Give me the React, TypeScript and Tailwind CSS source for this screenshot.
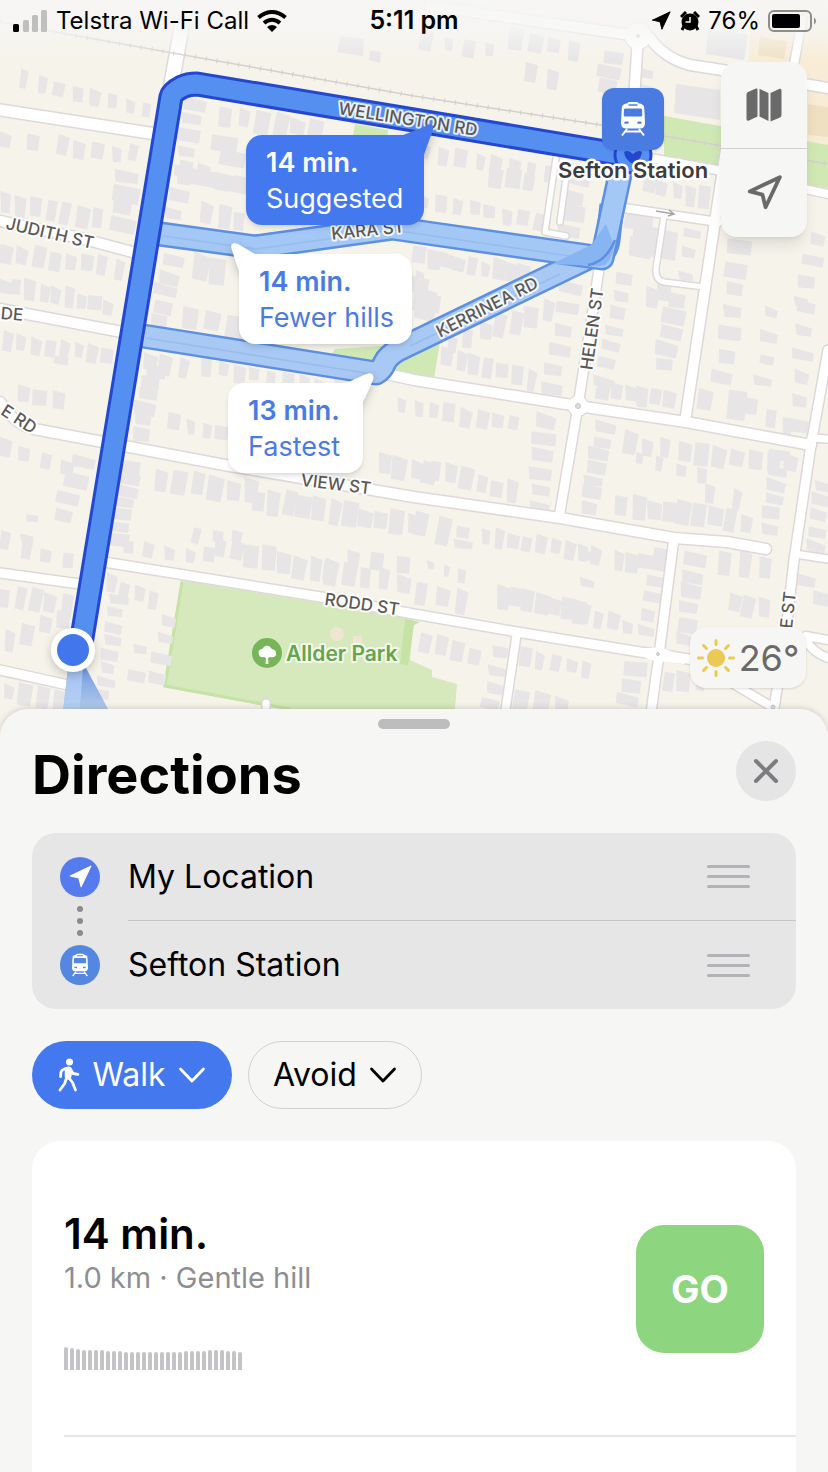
import React from "react";
import { Navigation, X } from "lucide-react";

// x1, y1, x2, y2, number of houses, house size
const houseRows = [
    [24, 80, 146, 110, 8, 13],
    [4, 140, 62, 146, 3, 16],
    [78, 150, 134, 154, 4, 14],
    [126, 176, 122, 226, 4, 20],
    [6, 202, 96, 218, 7, 15],
    [6, 254, 118, 268, 8, 15],
    [4, 286, 108, 306, 9, 15],
    [6, 340, 106, 356, 8, 14],
    [22, 392, 58, 400, 3, 16],
    [62, 362, 58, 396, 2, 10],
    [4, 446, 66, 468, 4, 15],
    [82, 462, 62, 514, 4, 18],
    [32, 518, 28, 540, 2, 12],
    [4, 540, 68, 562, 4, 13],
    [4, 598, 66, 606, 5, 16],
    [8, 640, 62, 618, 4, 15],
    [8, 690, 60, 702, 4, 16],
    [195, 104, 186, 152, 4, 17],
    [226, 116, 316, 130, 6, 17],
    [224, 142, 232, 158, 2, 20],
    [184, 172, 240, 184, 4, 16],
    [180, 196, 174, 214, 2, 16],
    [206, 212, 240, 220, 3, 17],
    [174, 262, 158, 322, 5, 17],
    [200, 268, 218, 270, 2, 20],
    [190, 316, 236, 328, 3, 19],
    [206, 368, 336, 388, 9, 14],
    [150, 362, 182, 370, 3, 16],
    [154, 370, 140, 434, 6, 17],
    [174, 422, 222, 434, 4, 15],
    [426, 152, 550, 174, 8, 14],
    [494, 176, 530, 182, 3, 17],
    [424, 200, 540, 222, 8, 13],
    [576, 180, 568, 232, 4, 20],
    [420, 256, 524, 274, 9, 15],
    [416, 284, 428, 302, 2, 22],
    [452, 342, 548, 312, 7, 16],
    [446, 356, 530, 380, 7, 15],
    [570, 288, 550, 390, 6, 17],
    [624, 278, 604, 380, 7, 16],
    [664, 290, 652, 296, 2, 16],
    [676, 300, 664, 364, 5, 18],
    [604, 390, 668, 398, 6, 15],
    [692, 232, 684, 274, 3, 13],
    [740, 248, 722, 376, 7, 18],
    [818, 240, 800, 300, 4, 16],
    [806, 308, 796, 424, 6, 16],
    [772, 314, 762, 380, 4, 14],
    [706, 400, 738, 404, 2, 22],
    [752, 408, 788, 428, 3, 14],
    [638, 222, 640, 246, 2, 24],
    [402, 406, 514, 424, 8, 14],
    [546, 422, 538, 506, 6, 18],
    [384, 462, 430, 474, 4, 17],
    [436, 470, 512, 492, 6, 16],
    [604, 428, 588, 506, 7, 16],
    [630, 444, 790, 464, 10, 16],
    [638, 460, 700, 474, 4, 12],
    [622, 504, 746, 522, 9, 17],
    [708, 494, 736, 500, 2, 14],
    [780, 456, 770, 528, 6, 16],
    [822, 486, 814, 546, 5, 15],
    [162, 480, 250, 492, 6, 17],
    [258, 500, 412, 524, 11, 18],
    [130, 466, 118, 540, 7, 16],
    [128, 548, 210, 556, 5, 14],
    [196, 534, 238, 538, 3, 12],
    [220, 548, 330, 574, 8, 18],
    [330, 572, 402, 582, 5, 16],
    [352, 556, 404, 566, 3, 15],
    [112, 584, 152, 600, 4, 14],
    [118, 600, 102, 696, 8, 15],
    [168, 620, 158, 676, 4, 15],
    [140, 650, 136, 676, 2, 15],
    [420, 524, 444, 530, 2, 22],
    [462, 532, 464, 544, 2, 14],
    [486, 536, 596, 554, 9, 14],
    [430, 566, 460, 574, 3, 10],
    [420, 594, 462, 600, 3, 18],
    [502, 596, 580, 610, 7, 17],
    [584, 614, 626, 626, 4, 14],
    [618, 562, 660, 560, 4, 16],
    [656, 564, 646, 632, 5, 15],
    [590, 556, 588, 584, 2, 13],
    [694, 560, 686, 640, 6, 18],
    [724, 562, 766, 568, 3, 20],
    [734, 602, 764, 608, 3, 18],
    [806, 580, 822, 600, 2, 18],
    [424, 642, 474, 656, 4, 15],
    [500, 652, 490, 704, 4, 16],
    [524, 658, 586, 668, 5, 14],
    [634, 668, 626, 700, 3, 17],
    [668, 682, 700, 684, 3, 16],
    [520, 700, 560, 706, 3, 18],
    [426, 42, 490, 50, 4, 14],
    [516, 40, 572, 50, 4, 16],
    [530, 72, 552, 78, 2, 17],
    [614, 56, 606, 88, 3, 17],
    [646, 74, 644, 86, 2, 12],
    [648, 186, 704, 198, 5, 16],
];

const roads = [
    { d: "M182 25 L170 92", w: 14 },
    { d: "M0 110 L156 134", w: 11 },
    { d: "M0 221 L80 238 L140 254", w: 10 },
    { d: "M0 309 L122 332", w: 10 },
    { d: "M0 402 Q14 424 34 429 L230 466 L414 497 L560 518 L674 538 L727 542 L766 549", w: 10 },
    { d: "M0 573 L80 584", w: 9 },
    { d: "M104 562 L327 598 L414 614 L517 632 L640 652 L670 656 L700 661 L740 664", w: 9 },
    { d: "M0 670 L68 685", w: 9 },
    { d: "M382 373 L414 380 L578 406 L686 422 L811 445", w: 10 },
    { d: "M811 438 L828 439", w: 7 },
    { d: "M602 250 L578 406 L559 518", w: 9 },
    { d: "M726 150 L714 228 L685 422", w: 10 },
    { d: "M664 216 L656 268 Q655 280 664 282 L704 287", w: 5 },
    { d: "M828 350 L811 445 L794 560 L785 640 L774 708", w: 9 },
    { d: "M674 538 L659 655 L650 720", w: 9 },
    { d: "M517 632 L504 720", w: 8 },
    { d: "M795 554 L828 559", w: 7 },
    { d: "M430 6 L638 36 L634 100", w: 10 },
    { d: "M638 36 L650 38 Q664 58 690 65 L722 70 L828 88", w: 10 },
    { d: "M802 20 L793 70", w: 8 },
    { d: "M650 158 L722 171 L828 194", w: 8 },
    { d: "M624 208 L718 222", w: 8 },
    { d: "M556 158 L545 232 L566 236 M567 170 L560 222", w: 5 },
    { d: "M700 664 L774 708 M806 640 Q812 652 828 658 M806 636 L828 640", w: 8 },
    { d: "M266 708 L266 703", w: 7 },
];

const streetLabels = [
    { text: "WELLINGTON RD", x: 408, y: 119, angle: 9 },
    { text: "KARA ST", x: 368, y: 230, angle: -6 },
    { text: "KERRINEA RD", x: 487, y: 307, angle: -27 },
    { text: "HELEN ST", x: 592, y: 329, angle: -82 },
    { text: "JUDITH ST", x: 50, y: 233, angle: 13 },
    { text: "VIEW ST", x: 336, y: 484, angle: 7 },
    { text: "RODD ST", x: 362, y: 604, angle: 8 },
    { text: "DE", x: 12, y: 314, angle: 5 },
    { text: "E RD", x: 19, y: 419, angle: 33 },
    { text: "E ST", x: 788, y: 610, angle: -84 },
];

const elevation = [23, 22, 21, 20, 20, 20, 20, 19, 19, 19, 18, 18, 18, 18, 18, 18, 18, 18, 18, 18, 19, 19, 19, 19, 20, 20, 20, 19, 19, 18];

const buildHouses = () => {
    const shapes: string[] = [];
    let seed = 7;
    const rand = () => {
        seed = (seed * 16807) % 2147483647;
        return seed / 2147483647;
    };
    houseRows.forEach(([x1, y1, x2, y2, count, size]) => {
        for (let i = 0; i < count; i++) {
            const t = count === 1 ? 0 : i / (count - 1);
            const vertical = Math.abs(y2 - y1) > Math.abs(x2 - x1);
            const w = size * (vertical ? 0.9 + rand() * 0.5 : 0.6 + rand() * 0.35);
            const h = size * (vertical ? 0.6 + rand() * 0.25 : 0.9 + rand() * 0.6);
            const cx = x1 + (x2 - x1) * t + (rand() - 0.5) * 3;
            const cy = y1 + (y2 - y1) * t + (rand() - 0.5) * 4;
            const skew = 0.16 + (rand() - 0.5) * 0.16;
            const notch = rand() * 3;
            const corners = [
                [-w / 2, -h / 2],
                [w / 2, -h / 2 + notch],
                [w / 2, h / 2],
                [-w / 2 + notch, h / 2],
            ];
            shapes.push(
                corners.map(([x, y]) => `${(cx + x - y * skew).toFixed(1)},${(cy + y + x * skew).toFixed(1)}`).join(" "),
            );
        }
    });
    return shapes;
};

const houses = buildHouses();

const TrainIcon = ({ className }: { className: string }) => (
    <svg viewBox="0 0 24 34" className={className} fill="currentColor" aria-hidden="true">
        <path
            fillRule="evenodd"
            d="M8 0h8q1 0 1.400 1.200Q23 2 23.200 5.500L24 21q0 5-4.500 5.500h-15Q0 26 0 21L.8 5.500Q1 2 6.600 1.200 7 0 8 0zM7.500 2.200v1.600h9V2.200zM4.300 6.500q-1.200 0-1.300 1.200L2.700 13q0 1.500 1.600 1.500h15.400q1.600 0 1.600-1.500L21 7.700q-.1-1.200-1.300-1.200zM4.500 19.500q-1.200 0-1.200 1.200t1.200 1.100h2q1.200 0 1.200-1.100t-1.200-1.200zm13 0q-1.200 0-1.200 1.200t1.200 1.100h2q1.200 0 1.200-1.100t-1.200-1.200z"
        />
        <path d="M6 27l-5 6.500M18 27l5 6.500M4.500 29.500h15" stroke="currentColor" strokeWidth="2" fill="none" />
    </svg>
);

const WalkIcon = () => (
    <svg viewBox="0 0 22 34" className="w-[22px] h-[34px]" fill="none" stroke="currentColor" strokeLinecap="round" strokeLinejoin="round" aria-hidden="true">
        <circle cx="11.500" cy="4" r="3.500" fill="currentColor" stroke="none" />
        <path d="M8 10.500q2.500-1.500 4.500 0v6.500l-1 4-3.500-2z" fill="currentColor" strokeWidth="2.500" />
        <path d="M7.500 10.500Q3.500 12 3 14l-.5 4.500M13 12l2 3.500 5 .8M8.500 20l-1.800 5.500-4.700 6.500M11 20l3.500 4.500 3 7.500" strokeWidth="2.800" />
    </svg>
);

const Chevron = () => (
    <svg viewBox="0 0 28 18" className="w-7 h-[18px]" fill="none" stroke="currentColor" strokeWidth="2.800" strokeLinecap="round" strokeLinejoin="round" aria-hidden="true">
        <path d="M2.500 3L14 15 25.500 3" />
    </svg>
);

const MapArt = () => (
    <svg
        viewBox="0 0 828 740"
        preserveAspectRatio="xMinYMin slice"
        className="absolute inset-0 w-full h-full"
        role="img"
        aria-label="Map of walking routes to Sefton Station"
    >
        <defs>
            <linearGradient id="topFade" x1="0" y1="0" x2="0" y2="1">
                <stop offset="0" stopColor="#f6f6f5" stopOpacity="0.95" />
                <stop offset="0.5" stopColor="#f6f6f5" stopOpacity="0.8" />
                <stop offset="1" stopColor="#f6f6f5" stopOpacity="0" />
            </linearGradient>
            <linearGradient id="heading" x1="0" y1="0" x2="0" y2="1">
                <stop offset="0" stopColor="#6e9be4" />
                <stop offset="1" stopColor="#a9c3e8" stopOpacity="0.7" />
            </linearGradient>
            <filter id="soft" x="-50%" y="-50%" width="200%" height="200%">
                <feDropShadow dx="0" dy="3" stdDeviation="5" floodOpacity="0.22" />
            </filter>
        </defs>
        <rect width="828" height="740" fill="#f6f3eb" />

        {/* commercial area and greens */}
        <path d="M752 0H828V150L806 145 800 90 748 70z" fill="#f8ecd6" />
        <path d="M760 36l12 3 15 2-3 18-26-4zM808 104l20 3v30l-20-2z" fill="#f0e0c2" />
        <path d="M664 116L828 145V188L664 158z" fill="#d0e8b4" />
        <path d="M355 124L388 130 380 224 338 224z" fill="#d0e8b4" />
        <path d="M335 349L440 342 434 378 330 357z" fill="#d0e8b4" />
        <path d="M181 580L414 618 410 660 432 670V677L457 684 454 720H340L163 687z" fill="#d6e9bc" />
        <path d="M405 619L420 622 414 625 408 665 400 664z" fill="#c6e2a4" />
        <path d="M182 582L165 686 290 709" fill="none" stroke="#c6e2a4" strokeWidth="3" />
        <circle cx="337" cy="634" r="7" fill="#eee6d2" />
        <rect x="353" y="636" width="9" height="7" rx="1" fill="#eee6d2" />

        <g fill="#e7e5e6">
            {houses.map((points, index) => (
                <polygon key={index} points={points} />
            ))}
            <path d="M340 36l24 3-1 17-26-4zM370 50l11 2-1 11-11-3z" />
            <path d="M174 164l14 3 60 12v16l-56-11-18-9z" />
            <path d="M708 30l40 4-4 26-38-6zM676 84l44 6v30l-46-7z" />
            <path d="M634 222l14 2 2 6 4-3 24 6-3 28-44-8z" />
            <path d="M416 270l8 3 1 16 12 4-3 30-20-6z" />
        </g>

        <g fill="none" strokeLinecap="round" strokeLinejoin="round">
            {roads.map((road, index) => (
                <path key={index} d={road.d} stroke="#dcd9db" strokeWidth={road.w + 3} />
            ))}
            <circle cx="578" cy="406" r="11" fill="#dcd9db" />
            <circle cx="638" cy="36" r="14" fill="#dcd9db" />
            {roads.map((road, index) => (
                <path key={index} d={road.d} stroke="#ffffff" strokeWidth={road.w} />
            ))}
        </g>
        <circle cx="578" cy="406" r="10" fill="#ffffff" />
        <circle cx="638" cy="36" r="13" fill="#ffffff" />
        <path d="M630 650L660 647 690 659 684 664 650 660z" fill="#ffffff" />
        <g fill="#dedcdd" stroke="#c9c7c9">
            <circle cx="578" cy="406" r="2.500" />
            <circle cx="638" cy="36" r="1.500" />
            <circle cx="658" cy="654" r="1.500" />
            <circle cx="773" cy="707" r="2" />
        </g>
        <path d="M656 211l18 3m-5-4l5 4-6 2" fill="none" stroke="#a8a6a6" strokeWidth="1.500" />

        {/* railway */}
        <g fill="none" stroke="#d3d0cd">
            <path d="M0 22L167 52 414 96 601 125 664 136 828 164" strokeWidth="1.500" />
            <path d="M0 22L167 52 414 96 601 125 664 136 828 164" strokeWidth="5" strokeDasharray="1 10" />
        </g>
        <rect width="828" height="60" fill="url(#topFade)" />

        {/* alternative routes */}
        <g fill="none" strokeLinejoin="round">
            <path d="M143 336L376 373Q382 370 385 362 388 356 398 350L590 257Q606 256 608 240L612 205" stroke="#5d8fe2" strokeWidth="25" />
            <path d="M143 336L376 373Q382 370 385 362 388 356 398 350L590 257Q606 256 608 240L612 205" stroke="#a8c9f4" strokeWidth="20" />
            <path d="M160 234L256 247 392 228 602 258 606 240L622 165" stroke="#5d8fe2" strokeWidth="25" />
            <path d="M160 234L256 247 392 228 602 258 606 240L622 165" stroke="#a4c8f6" strokeWidth="20" />
            <path d="M146 338L372 374M163 236L256 249 392 230 590 259M410 346L560 274" stroke="#98bbea" strokeWidth="1.500" />
            <path d="M552 264L591 245 606 224 614 246Q610 268 598 266z" fill="#86b5f2" />
            <path d="M588 265Q606 262 615 240" stroke="#5d8fe2" strokeWidth="2.500" />
        </g>

        {/* suggested route */}
        <g fill="none" strokeLinejoin="round">
            <path d="M80 650L171 97Q172 92 182 87 188 84 197 84L630 156" stroke="#2447d1" strokeWidth="25" />
            <path d="M80 650L171 97Q172 92 182 87 188 84 197 84L630 156" stroke="#5590f0" strokeWidth="19" />
        </g>
        <circle cx="633" cy="155" r="18" fill="#5590f0" stroke="#2447d1" strokeWidth="3" />
        <path d="M624 152q4-3 9 2 5-5 9-2-1 8-9 12-8-4-9-12z" fill="#2447d1" />

        {/* current location */}
        <path d="M68 668L62 720H114L86 668z" fill="url(#heading)" />
        <path d="M68 668L62 720H79L83 668z" fill="#b5d1f6" opacity="0.75" />
        <circle cx="73" cy="650" r="22" fill="#ffffff" filter="url(#soft)" />
        <circle cx="73" cy="650" r="16" fill="#4277ec" />

        <g fontFamily="Inter, sans-serif" fontSize="17" fontWeight="500" fill="#5b5858" textAnchor="middle" dominantBaseline="central" stroke="#ffffff" strokeOpacity="0.85" strokeWidth="4" strokeLinejoin="round" paintOrder="stroke">
            {streetLabels.map((label) => (
                <text key={label.text} x={label.x} y={label.y} transform={`rotate(${label.angle} ${label.x} ${label.y})`}>
                    {label.text}
                </text>
            ))}
        </g>

        {/* park marker */}
        <circle cx="267" cy="653" r="15" fill="#76b558" />
        <path d="M259 655q-2-5 3-6 5-7 10 0 5 1 4 6-1 3-6 2l-2 1 .5 6h-3l.5-6-2-1q-4 1-5-2z" fill="#ffffff" />
        <text x="286" y="661" fontFamily="Inter, sans-serif" fontSize="21" fontWeight="600" fill="#66a54e" stroke="#f3f8ea" strokeWidth="4" strokeLinejoin="round" paintOrder="stroke">
            Allder Park
        </text>

        {/* callout tails */}
        <g filter="url(#soft)">
            <path d="M398 137L424 127Q434 120 433 130L422 160z" fill="#4478ee" />
            <path d="M258 256L238 244Q229 241 232 250L240 274z" fill="#ffffff" />
            <path d="M342 385L364 375Q375 370 373 380L361 406z" fill="#ffffff" />
        </g>
    </svg>
);

const callouts = [
    { time: "14 min.", note: "Suggested", box: "left-[246px] top-[135px] w-[178px] bg-[#4478ee] text-white" },
    { time: "14 min.", note: "Fewer hills", box: "left-[239px] top-[254px] w-[173px] bg-white text-[#4b7be0]" },
    { time: "13 min.", note: "Fastest", box: "left-[228px] top-[383px] w-[135px] bg-white text-[#4b7be0]" },
];

const StatusBar = () => (
    <div className="relative grid grid-cols-[1fr_auto_1fr] items-center h-[42px] px-3 text-2xl text-black">
        <div className="flex items-center gap-2">
            <svg viewBox="0 0 36 22" className="w-9 h-[22px]" aria-hidden="true">
                <rect x="1" y="14" width="6" height="8" rx="1.500" fill="#000000" />
                <g fill="#bfbfbd">
                    <rect x="11" y="10" width="6" height="12" rx="1.500" />
                    <rect x="20" y="5" width="6" height="17" rx="1.500" />
                    <rect x="29" y="0" width="6" height="22" rx="1.500" />
                </g>
            </svg>
            <span className="whitespace-nowrap">Telstra Wi-Fi Call</span>
            <svg viewBox="0 0 30 22" className="w-[30px] h-[22px]" fill="none" stroke="#000000" strokeWidth="4" aria-hidden="true">
                <path d="M1.500 7.500Q15-3.500 28.500 7.500M7 13Q15 6.500 23 13" />
                <path d="M10 17Q15 13 20 17L15 22z" fill="#000000" stroke="none" />
            </svg>
        </div>
        <div className="text-[25px] font-semibold">5:11 pm</div>
        <div className="flex items-center justify-end gap-2">
            <Navigation className="size-[22px]" fill="currentColor" strokeWidth={1} />
            <svg viewBox="0 0 20 20" className="size-5" aria-hidden="true">
                <path d="M4 15l-2 4M16 15l2 4M1 6l5-5M19 6l-5-5" stroke="#000000" strokeWidth="3" />
                <circle cx="10" cy="11" r="8.500" fill="#000000" />
                <path d="M10 6v5H5.500" stroke="#f6f6f5" strokeWidth="1.500" fill="none" />
            </svg>
            <span>76%</span>
            <svg viewBox="0 0 48 22" className="w-12 h-[22px]" aria-hidden="true">
                <rect x="1" y="1" width="42" height="20" rx="5" fill="none" stroke="#8f8d88" strokeWidth="2" />
                <rect x="4" y="4" width="28" height="14" rx="2" fill="#000000" />
                <path d="M46 7.500q2 1 2 3.500t-2 3.500z" fill="#8f8d88" />
            </svg>
        </div>
    </div>
);

const MapView = () => (
    <section className="relative h-[740px] shrink-0 overflow-hidden">
        <MapArt />
        <StatusBar />
        {callouts.map((callout) => (
            <button
                key={callout.note}
                className={`absolute h-[90px] pt-px pl-5 rounded-2xl text-left text-[27px] leading-9 whitespace-nowrap shadow-md ${callout.box}`}
            >
                <span className="block font-semibold">{callout.time}</span>
                <span className="block">{callout.note}</span>
            </button>
        ))}

        <div className="absolute left-[633px] top-[88px] -translate-x-1/2 flex flex-col items-center gap-1">
            <div className="size-[62px] rounded-xl bg-[#4a7be0] text-white flex items-center justify-center shadow">
                <TrainIcon className="w-6 h-9" />
            </div>
            <svg viewBox="0 0 180 32" className="w-[180px] h-8">
                <text x="90" y="24" textAnchor="middle" fontFamily="Inter, sans-serif" fontSize="22" fontWeight="600" fill="#3c3b3d" stroke="#ffffff" strokeWidth="5" strokeLinejoin="round" paintOrder="stroke">
                    Sefton Station
                </text>
            </svg>
        </div>

        <div className="absolute right-[21px] top-[62px] w-[86px] rounded-2xl bg-[#f6f6f5] text-[#6a6a6a] shadow-lg divide-y divide-[#d2d2d1]">
            <button aria-label="Map type" className="flex w-full h-[87px] items-center justify-center">
                <svg viewBox="0 0 36 34" className="w-9 h-[34px]" fill="currentColor" aria-hidden="true">
                    <path d="M2 4L10 .5q1.500-.5 1.500 1v27L3 32.500Q.5 33.500.5 31V6.500Q.5 4.700 2 4zM13.500.8L22.500 5v28L13.500 28.500zM24.500 5l8.500-4Q35.500 0 35.500 2.500V27q0 1.800-1.500 2.500l-9.500 4z" />
                </svg>
            </button>
            <button aria-label="Track location" className="flex w-full h-[88px] items-center justify-center">
                <Navigation className="size-[38px]" strokeWidth={2.4} />
            </button>
        </div>

        <div className="absolute right-[22px] top-[627px] h-[61px] w-[116px] rounded-2xl bg-[#f6f6f5] text-[#6a6a6a] shadow flex items-center justify-center gap-1">
            <svg viewBox="0 0 38 38" className="size-[38px]" aria-hidden="true">
                <circle cx="19" cy="19" r="9" fill="#ecc854" />
                <path
                    d="M19 1.500v4M19 32.500v4M1.500 19h4M32.500 19h4M6.500 6.500l3 3M28.500 28.500l3 3M31.500 6.500l-3 3M9.500 28.500l-3 3"
                    stroke="#ecc854"
                    strokeWidth="3"
                    strokeLinecap="round"
                />
            </svg>
            <span className="text-[36px] leading-none">26°</span>
        </div>
    </section>
);

const ReorderHandle = ({ label }: { label: string }) => (
    <button aria-label={`Reorder ${label}`} className="flex w-[43px] flex-col gap-[7px]">
        <span className="h-[3px] w-full rounded-full bg-[#b3b3b7]" />
        <span className="h-[3px] w-full rounded-full bg-[#b3b3b7]" />
        <span className="h-[3px] w-full rounded-full bg-[#b3b3b7]" />
    </button>
);

const Stops = () => (
    <div className="mt-6 flex rounded-3xl bg-[#e6e6e6]">
        <div className="flex w-24 shrink-0 flex-col items-center justify-center gap-[9px]">
            <div className="size-10 rounded-full bg-[#557bee] text-white flex items-center justify-center">
                <Navigation className="size-[26px]" fill="currentColor" strokeWidth={1} />
            </div>
            <div className="flex flex-col gap-[6px]">
                <span className="size-[6px] rounded-full bg-[#8b8b8f]" />
                <span className="size-[6px] rounded-full bg-[#8b8b8f]" />
                <span className="size-[6px] rounded-full bg-[#8b8b8f]" />
            </div>
            <div className="size-10 rounded-full bg-[#5487e0] text-white flex items-center justify-center">
                <TrainIcon className="w-4 h-6" />
            </div>
        </div>
        <ul className="flex-1 divide-y divide-[#c6c6c8] text-[32px]">
            {["My Location", "Sefton Station"].map((stop) => (
                <li key={stop} className="flex h-[88px] items-center justify-between pr-[46px]">
                    <span>{stop}</span>
                    <ReorderHandle label={stop} />
                </li>
            ))}
        </ul>
    </div>
);

const DirectionsSheet = () => (
    <section className="relative -mt-[31px] flex flex-1 flex-col rounded-t-[28px] bg-[#f6f6f5] px-8 pt-[10px] shadow-[0_-1px_6px_rgba(0,0,0,0.15)]">
        <div className="mx-auto h-[10px] w-[72px] rounded-full bg-[#bdbdbd]" />
        <div className="mt-3 flex items-start justify-between">
            <h1 className="text-[54px] leading-[68px] font-bold">Directions</h1>
            <button aria-label="Close" className="size-[60px] rounded-full bg-[#e5e5e6] text-[#7d7d81] flex items-center justify-center">
                <X className="size-10" strokeWidth={2.4} />
            </button>
        </div>

        <Stops />

        <div className="mt-8 flex gap-4 text-[32px]">
            <button className="flex h-[68px] w-[200px] items-center justify-center gap-3 rounded-full bg-[#4478ee] text-white">
                <WalkIcon />
                Walk
                <Chevron />
            </button>
            <button className="flex h-[68px] w-[174px] items-center justify-center gap-3 rounded-full border border-[#d2d2d4]">
                Avoid
                <Chevron />
            </button>
        </div>

        <div className="mt-8 flex-1 rounded-t-[28px] bg-white pl-8">
            <div className="flex items-center justify-between border-b-2 border-[#e6e6e7] pt-[67px] pb-[65px] pr-8">
                <div>
                    <h2 className="text-[42px] leading-[52px] font-semibold">14 min.</h2>
                    <p className="text-[29px] leading-9 text-[#8e8e92]">1.0 km · Gentle hill</p>
                    <div className="mt-[50px] flex h-6 items-end gap-[2px]">
                        {elevation.map((height, index) => (
                            <span key={index} className="w-1 rounded-t-sm bg-[#c4c4c6]" style={{ height }} />
                        ))}
                    </div>
                </div>
                <button className="size-32 rounded-[28px] bg-[#8ed57f] text-[38px] font-bold text-white">GO</button>
            </div>
        </div>
    </section>
);

const App = () => {
    return (
        <main className="flex min-h-screen flex-col bg-[#f6f3eb] font-['Inter',sans-serif] text-black">
            <MapView />
            <DirectionsSheet />
        </main>
    );
};

export default App;
